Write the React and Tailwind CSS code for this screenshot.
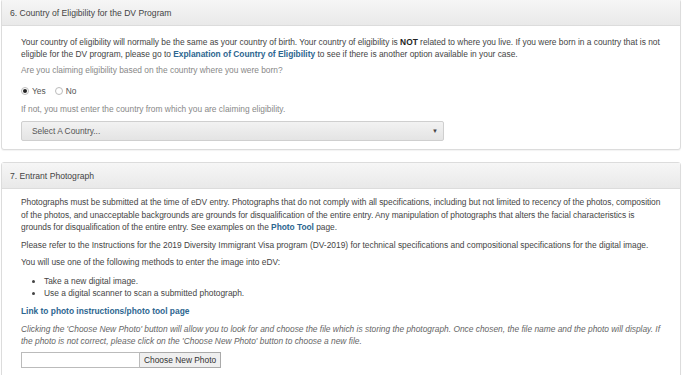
import React from 'react';

const font = { fontFamily: '"Liberation Sans", Arial, Helvetica, sans-serif' };

function Panel({ title, children, className = '' }) {
  return (
    <div className={`mx-[1px] rounded-[3px] border border-[#dcdcdc] bg-white shadow-[0_1px_1px_rgba(0,0,0,0.05)] ${className}`}>
      <div className="flex h-[26px] items-center border-b border-[#dcdcdc] bg-gradient-to-b from-[#f6f6f6] to-[#e9e9e9] px-[8px] text-[8.6px] text-[#444]">
        {title}
      </div>
      <div className="px-[19px] pt-[8px]">{children}</div>
    </div>
  );
}

function Radio({ checked }) {
  return (
    <span className="flex h-[8px] w-[8px] items-center justify-center rounded-full border border-[#bbb] bg-white">
      {checked && <span className="h-[4px] w-[4px] rounded-full bg-[#222]" />}
    </span>
  );
}

export default function App() {
  return (
    <div style={font} className="h-[375px] w-[682px] overflow-hidden bg-white text-[8.4px] leading-[12px] text-[#444]">
      <Panel title="6. Country of Eligibility for the DV Program" className="-mt-[1px] h-[151px]">
        <p className="mt-[2px]">
          Your country of eligibility will normally be the same as your country of birth. Your country of eligibility is{' '}
          <b className="text-[#222]">NOT</b> related to where you live. If you were born in a country that is not eligible for the DV
          program, please go to{' '}
          <a className="font-bold text-[#2d6690]">Explanation of Country of Eligibility</a> to see if there is another option
          available in your case.
        </p>
        <p className="mt-[4px] text-[#888]">Are you claiming eligibility based on the country where you were born?</p>
        <div className="mt-[9px] flex items-center gap-[3px] text-[#555]">
          <Radio checked />
          <span>Yes</span>
          <span className="ml-[3px]" />
          <Radio />
          <span>No</span>
        </div>
        <p className="mt-[6px] text-[#888]">If not, you must enter the country from which you are claiming eligibility.</p>
        <div className="mt-[6px] flex h-[20px] w-[423px] items-center justify-between rounded-[2px] border border-[#cfcfcf] bg-gradient-to-b from-[#f2f2f2] to-[#e4e4e4] pl-[10px] pr-[5px] text-[#555]">
          <span>Select A Country...</span>
          <span className="text-[6px] text-[#444]">▼</span>
        </div>
      </Panel>

      <Panel title="7. Entrant Photograph" className="mt-[12px] h-[240px]">
        <p className="-mt-[1px] whitespace-nowrap leading-[12.5px] tracking-[-0.03px]">
          Photographs must be submitted at the time of eDV entry. Photographs that do not comply with all specifications, including
          but not limited to recency of the photos, composition
          <br />
          of the photos, and unacceptable backgrounds are grounds for disqualification of the entire entry. Any manipulation of
          photographs that alters the facial characteristics is
          <br />
          grounds for disqualification of the entire entry. See examples on the{' '}
          <a className="font-bold text-[#2d6690]">Photo Tool</a> page.
        </p>
        <p className="mt-[5px]">
          Please refer to the Instructions for the 2019 Diversity Immigrant Visa program (DV-2019) for technical specifications and
          compositional specifications for the digital image.
        </p>
        <p className="mt-[5px]">You will use one of the following methods to enter the image into eDV:</p>
        <ul className="mt-[7px] list-disc pl-[23px]">
          <li>Take a new digital image.</li>
          <li>Use a digital scanner to scan a submitted photograph.</li>
        </ul>
        <p className="mt-[6px]">
          <a className="font-bold text-[#2d6690]">Link to photo instructions/photo tool page</a>
        </p>
        <p className="mt-[6px] italic text-[#666]">
          Clicking the 'Choose New Photo' button will allow you to look for and choose the file which is storing the photograph. Once
          chosen, the file name and the photo will display. If the photo is not correct, please click on the 'Choose New Photo' button
          to choose a new file.
        </p>
        <div className="mt-[5px] flex h-[16px]">
          <span className="w-[119px] border border-[#bbb] bg-white" />
          <span className="flex items-center border border-l-0 border-[#aaa] bg-[#efefef] px-[4px] text-[#333]">Choose New Photo</span>
        </div>
      </Panel>
    </div>
  );
}
